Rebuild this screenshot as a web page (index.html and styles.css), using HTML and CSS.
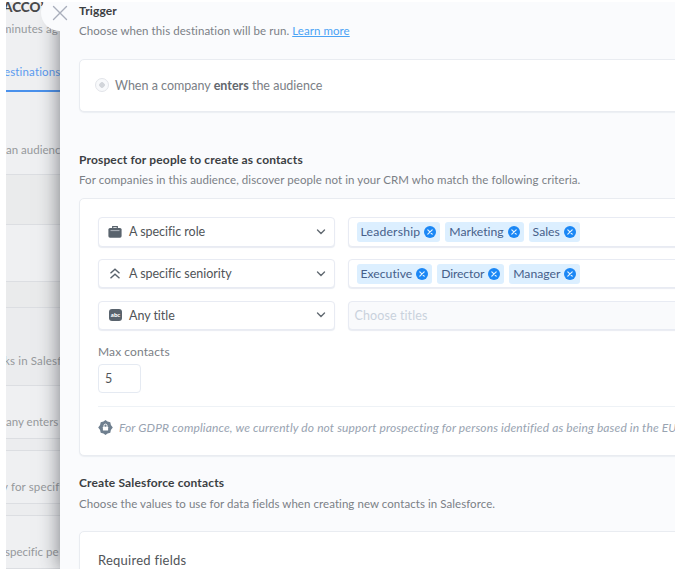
FILE: index.html
```html
<!DOCTYPE html>
<html lang="en">
<head>
<meta charset="utf-8">
<title>Destination settings</title>
<link rel="stylesheet" href="styles.css">
</head>
<body>
<svg width="0" height="0" class="defs">
  <symbol id="remove" viewBox="0 0 12 12"><circle cx="6" cy="6" r="6" fill="#1b87f5"/><path d="M3.8 3.8l4.4 4.4M8.2 3.8L3.8 8.2" stroke="#e4f3ff" stroke-width="1.2" stroke-linecap="round"/></symbol>
  <symbol id="chevron" viewBox="0 0 10 6"><path d="M1.5 1L5 4.5 8.500 1" fill="none" stroke="#626a72" stroke-width="1.4" stroke-linecap="round"/></symbol>
</svg>
<div class="screen">
  <div class="backdrop">
    <div class="head">
      <div class="name"><span>ACCO’</span></div>
      <div class="ago"><span>minutes ag</span></div>
      <div class="tab"><span>estinations</span></div>
    </div>
    <div class="band b1"><span>an audienc</span></div>
    <div class="band b2"></div>
    <div class="band b3"></div>
    <div class="band b4"></div>
    <div class="band b5"><span>ks in Salesf</span></div>
    <div class="band b6"><span>any enters</span></div>
    <div class="band gap"></div>
    <div class="band b7"><span>y for specifi</span></div>
    <div class="band gap"></div>
    <div class="band b8"><span>specific pe</span></div>
  </div>
  <div class="close"><svg width="16" height="16" viewBox="0 0 16 16"><path d="M1.500 1.500l13 13M14.500 1.500l-13 13" stroke="#a9aebb" stroke-width="1.400" stroke-linecap="round"/></svg></div>
  <main class="drawer">
    <h2>Trigger</h2>
    <p class="sub s1">Choose when this destination will be run. <a>Learn more</a></p>
    <section class="card trigger"><i class="radio"></i><span>When a company <b>enters</b> the audience</span></section>
    <h2 class="h-prospect">Prospect for people to create as contacts</h2>
    <p class="sub s2">For companies in this audience, discover people not in your CRM who match the following criteria.</p>
    <section class="card criteria">
      <div class="row">
        <div class="select"><svg class="ic" width="14" height="14" viewBox="0 0 14 14"><path d="M4.700 3V1.700h4.600V3" fill="none" stroke="#59636d" stroke-width="1.200"/><rect x=".4" y="2.900" width="13.200" height="9.800" rx="1.600" fill="#59636d"/><path d="M2.500 5.600h9" stroke="#b9c0c6" stroke-width=".9"/></svg><span>A specific role</span><svg class="chev" width="10" height="6"><use href="#chevron"/></svg></div>
        <div class="input"><div class="tag wide"><span>Leadership</span><svg width="12" height="12"><use href="#remove"/></svg></div><div class="tag"><span>Marketing</span><svg width="12" height="12"><use href="#remove"/></svg></div><div class="tag"><span>Sales</span><svg width="12" height="12"><use href="#remove"/></svg></div></div>
      </div>
      <div class="row">
        <div class="select"><svg class="ic" width="14" height="14" viewBox="0 0 14 14"><path d="M2.500 6.300L7 2.300l4.500 4M2.500 11.300L7 7.300l4.500 4" fill="none" stroke="#59636d" stroke-width="1.400"/></svg><span>A specific seniority</span><svg class="chev" width="10" height="6"><use href="#chevron"/></svg></div>
        <div class="input"><div class="tag"><span>Executive</span><svg width="12" height="12"><use href="#remove"/></svg></div><div class="tag tight"><span>Director</span><svg width="12" height="12"><use href="#remove"/></svg></div><div class="tag"><span>Manager</span><svg width="12" height="12"><use href="#remove"/></svg></div></div>
      </div>
      <div class="row">
        <div class="select"><span class="ic abc">abc</span><span>Any title</span><svg class="chev" width="10" height="6"><use href="#chevron"/></svg></div>
        <div class="input empty"><span>Choose titles</span></div>
      </div>
      <div class="max">Max contacts</div>
      <div class="num">5</div>
      <div class="gdpr"><svg width="15" height="15" viewBox="0 0 15 15"><path d="M7.500 0l2 1.600 2.800.600.600 2.800 1.900 2.500-1.900 2.500-.600 2.800-2.800.600-2 1.600-2-1.600-2.800-.600-.600-2.800L.200 7.500 2.100 5l.600-2.800 2.800-.600z" fill="#6f7f8f"/><rect x="4.900" y="6.700" width="5.200" height="3.900" rx=".5" fill="#fff"/><path d="M6 7V5.600a1.500 1.500 0 013 0V7" fill="none" stroke="#fff" stroke-width="1"/></svg><em>For GDPR compliance, we currently do not support prospecting for persons identified as being based in the EU</em></div>
    </section>
    <h2 class="h-create">Create Salesforce contacts</h2>
    <p class="sub s3">Choose the values to use for data fields when creating new contacts in Salesforce.</p>
    <section class="card fields">Required fields</section>
  </main>
</div>
</body>
</html>
```
FILE: styles.css
```css
* { box-sizing: border-box; }
body { margin: 0; background: #fff; font-family: Lato, sans-serif; font-size: 12px; color: #505458; font-variant-ligatures: none; }
.defs { position: absolute; }
.screen { position: relative; display: flex; width: 669px; height: 567px; margin: 2px 0 0 6px; overflow: hidden; background: #eff0f2; }
span, em, h2, p { white-space: nowrap; }

.backdrop { width: 54px; flex: none; overflow: hidden; color: #96999c; font-size: 11.5px; }
.head { height: 90px; border-bottom: 2px solid #4a91ec; display: flex; flex-direction: column; }
.name { height: 10px; line-height: 10px; font-size: 13.500px; font-weight: 900; color: #48494b; margin-left: -3px; }
.ago { margin: 9px 0 0 -4px; line-height: 16px; letter-spacing: .1px; }
.tab { margin: 27px 0 0 -2px; line-height: 16px; color: #5a9af0; letter-spacing: .15px; }
.band { display: flex; align-items: flex-end; border-bottom: 1px solid #dcdee2; }
.band span { line-height: 16px; }
.b1 { height: 83px; padding-bottom: 16px; }
.b2 { height: 50px; background: #eaebec; }
.b3 { height: 57px; }
.b4 { height: 26px; background: #eaebec; }
.b5 { height: 78px; padding-bottom: 16px; background: #ebecee; }
.b5 span { margin-left: -2px; letter-spacing: .15px; }
.b6 { height: 53px; padding-bottom: 8px; }
.gap { height: 12px; background: #ecedef; }
.b7 { height: 53px; padding-bottom: 8px; }
.b7 span { margin-left: -4px; letter-spacing: .15px; }
.b8 { height: 53px; padding-bottom: 8px; }
.b8 span { margin-left: -1px; }

.close { position: absolute; left: 35px; top: -8px; width: 37px; height: 37px; border-radius: 50%; background: #fafbfd; display: flex; align-items: center; justify-content: center; z-index: 2; }
.drawer { position: relative; flex: 1; min-width: 0; padding: 0 0 0 19px; background: #fafbfd; box-shadow: 0 0 20px rgba(40, 44, 50, .6); }
h2 { margin: 0; padding-top: 1px; font-size: 12px; line-height: 16px; font-weight: 700; color: #3c3f43; letter-spacing: .15px; position: relative; z-index: 3; }
.sub { margin: 5px 0 0; line-height: 16px; font-size: 11.5px; color: #7b8086; }
.s1 { margin-top: 4px; letter-spacing: .07px; }
.s2 { margin-top: 4px; letter-spacing: .08px; }
.sub a { color: #4ba3f5; text-decoration: underline; }
.card { width: 640px; border: 1px solid #e9ecf1; border-radius: 5px; background: #fff; box-shadow: 0 1px 1px #eceff3; }
.trigger { height: 53px; margin-top: 20px; display: flex; align-items: center; padding: 0 0 1px 15px; gap: 6px; color: #7b8086; font-size: 12.5px; }
.trigger b { color: #62676d; }
.radio { width: 14px; height: 14px; border-radius: 50%; border: 1px solid #e2e4e9; background: radial-gradient(circle, #d2d5da 0 2.500px, #f8f9fb 3px); }
.h-prospect { margin-top: 39px; }
.criteria { height: 258px; margin-top: 10px; padding: 18px 0 0 18px; }
.row { display: flex; gap: 12.5px; margin-bottom: 12.300px; }
.select, .input { height: 29.500px; border: 1px solid #e8ebf3; border-radius: 4px; box-shadow: 0 1px 1px #e9ecf2; display: flex; align-items: center; background: #fff; }
.select { width: 237px; padding: 0 8px 0 9px; font-size: 12.500px; letter-spacing: -.04px; }
.ic { margin-right: 7px; flex: none; }
.abc { width: 13px; height: 12px; margin-left: 1px; border-radius: 3px; background: #59636d; color: #fff; font-size: 6px; line-height: 11px; text-align: center; font-weight: 900; }
.chev { margin-left: auto; }
.input { flex: 1; padding-left: 8px; gap: 5px; }
.tag { display: flex; align-items: center; height: 20px; padding: 0 4px; gap: 4px; border-radius: 3px; background: #dcefff; color: #46608a; font-size: 12.200px; }
.wide { letter-spacing: .2px; }
.tight { letter-spacing: -.15px; }
.empty { background: #f9fafc; color: #c9d2dd; padding-left: 6px; font-size: 12.500px; letter-spacing: .1px; }
.max { margin-top: 13.500px; line-height: 16px; font-size: 12px; color: #7b8086; letter-spacing: .1px; }
.num { width: 43px; height: 29px; margin-top: 4px; padding-left: 6px; line-height: 28px; border: 1px solid #e5eaf2; border-radius: 4px; font-size: 12.500px; }
.gdpr { margin-top: 13px; padding-top: 13px; border-top: 1px solid #eef2f6; display: flex; align-items: center; gap: 6px; color: #98a3b1; font-size: 12px; letter-spacing: .13px; }
.h-create { margin-top: 18px; }
.s3 { letter-spacing: .06px; }
.fields { height: 80px; margin-top: 19px; padding: 19px 0 0 18px; line-height: 18px; font-size: 13px; letter-spacing: .25px; }
```
